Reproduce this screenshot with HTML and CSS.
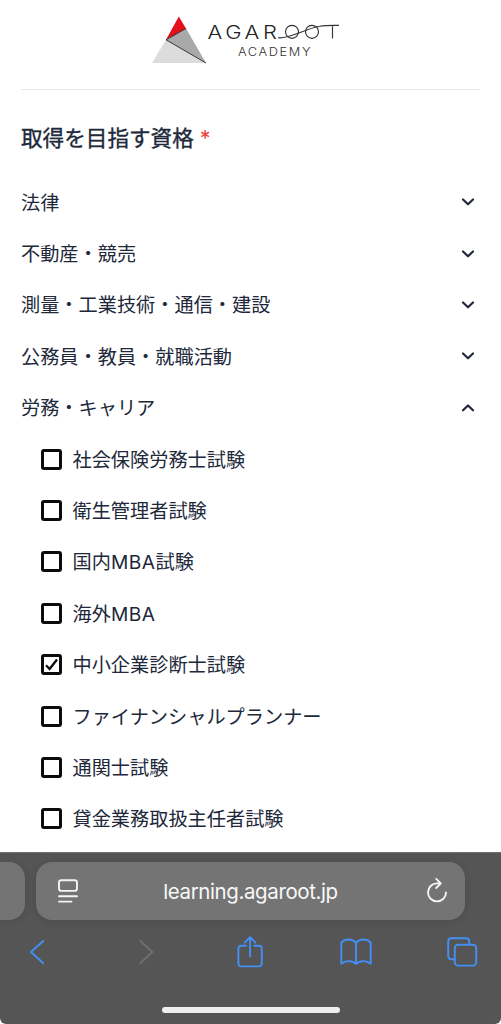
FILE: index.html
```html
<!DOCTYPE html>
<html lang="ja">
<head>
<meta charset="utf-8">
<title>AGAROOT ACADEMY</title>
<link rel="stylesheet" href="styles.css">
</head>
<body>
<div class="screen">
  <main class="page">
    <header class="header">
      <svg class="logo" width="190" height="52" viewBox="151 14 190 52">
        <path d="M178.8 16.5 186 28.5 166 39.8Z" fill="#e60f1c"/>
        <path d="M186 28.5 206 63 166 39.8Z" fill="#a9a9a9"/>
        <path d="M166 39.8 206 63H152Z" fill="#dcdcdc"/>
        <path d="M186 28.5 166 39.8 206 63" fill="none" stroke="#222" stroke-width=".9"/>
        <text class="brand" x="207.5" y="38.5" textLength="73" lengthAdjust="spacingAndGlyphs">AGAR</text>
        <g fill="none" stroke="#333" stroke-width="1.15">
          <circle cx="292" cy="31.8" r="6.5"/>
          <circle cx="312" cy="31.8" r="6.5"/>
          <path d="M278 37.8C290 39 304 29 320 26.3 325 25.2 331 25.4 339 25.4M332.5 25.4V38.5"/>
        </g>
        <text class="brand-sub" x="238" y="55.8" textLength="74" lengthAdjust="spacingAndGlyphs">ACADEMY</text>
      </svg>
    </header>
    <h1 class="title">取得を目指す資格 <span class="required">*</span></h1>
    <ul class="list">
      <li class="row">法律<svg class="chevron" viewBox="0 0 14 8"><path d="M2 1.5 7 6.3 12 1.5"/></svg></li>
      <li class="row">不動産・競売<svg class="chevron" viewBox="0 0 14 8"><path d="M2 1.5 7 6.3 12 1.5"/></svg></li>
      <li class="row">測量・工業技術・通信・建設<svg class="chevron" viewBox="0 0 14 8"><path d="M2 1.5 7 6.3 12 1.5"/></svg></li>
      <li class="row">公務員・教員・就職活動<svg class="chevron" viewBox="0 0 14 8"><path d="M2 1.5 7 6.3 12 1.5"/></svg></li>
      <li class="row">労務・キャリア<svg class="chevron" viewBox="0 0 14 8"><path d="M2 6.3 7 1.5 12 6.3"/></svg></li>
      <li class="option"><span class="box"></span><span>社会保険労務士試験</span></li>
      <li class="option"><span class="box"></span><span>衛生管理者試験</span></li>
      <li class="option"><span class="box"></span><span>国内<span class="latin">MBA</span>試験</span></li>
      <li class="option"><span class="box"></span><span>海外<span class="latin">MBA</span></span></li>
      <li class="option"><span class="box"><svg class="check" viewBox="0 0 15 15"><path d="M2 8.2 5.6 12 13 2.5"/></svg></span><span>中小企業診断士試験</span></li>
      <li class="option"><span class="box"></span><span>ファイナンシャルプランナー</span></li>
      <li class="option"><span class="box"></span><span>通関士試験</span></li>
      <li class="option"><span class="box"></span><span>貸金業務取扱主任者試験</span></li>
    </ul>
  </main>
  <footer class="browser">
    <div class="tabs">
      <div class="prev-tab"></div>
      <div class="address">
        <svg class="reader" width="22" height="26" viewBox="0 0 22 26"><rect x="2" y="2.3" width="18" height="10.6" rx="2.4"/><path d="M2 18.3H20M2 23.6H14.5"/></svg>
        <span class="url">learning.agaroot.jp</span>
        <svg class="reload" width="22" height="26" viewBox="0 0 22 26"><path d="M14 5.4H11A9 9 0 1 0 20 14.4M10.2 .9 14.8 5.4 10.2 10"/></svg>
      </div>
    </div>
    <nav class="tools">
      <svg width="32" height="32" viewBox="0 0 32 32"><path d="M22.2 5 10 16 22.2 27.2"/></svg>
      <svg class="disabled" width="32" height="32" viewBox="0 0 32 32"><path d="M13.2 5 25.4 16 13.2 27.2"/></svg>
      <svg width="32" height="32" viewBox="0 0 32 32"><path d="M12 9.8H7.2Q4.4 9.8 4.4 12.6V27.6Q4.4 30.4 7.2 30.4H25Q27.8 30.4 27.8 27.6V12.6Q27.8 9.8 25 9.8H20.2M16.1 20.5V1.5M10.8 6.5 16.1 1.2 21.4 6.5"/></svg>
      <svg width="32" height="32" viewBox="0 0 32 32"><path d="M16 6.8C12 2.2 4.5 2.8 1.3 6.6V27.8C5 24.5 12 24 16 28 20 24 27 24.5 30.7 27.8V6.6C27.5 2.8 20 2.2 16 6.8ZM16 6.8V28"/></svg>
      <svg width="32" height="32" viewBox="0 0 32 32"><path d="M8.8 23.2H5.4Q2.2 23.2 2.2 20V5.5Q2.2 2.3 5.4 2.3H20Q23.2 2.3 23.2 5.5V8.5"/><rect x="8.8" y="8.8" width="21.4" height="20.8" rx="3.2"/></svg>
    </nav>
    <div class="home"></div>
  </footer>
</div>
</body>
</html>
```
FILE: styles.css
```css
* { box-sizing: border-box; }
body { margin: 0; background: #fff; font-family: Inter, "Noto Sans CJK JP", sans-serif; color: #20283a; }
.screen { width: 501px; height: 1024px; display: flex; flex-direction: column; overflow: hidden; }
.page { height: 852px; flex: none; padding: 0 21px; overflow: hidden; }
.header { height: 90px; padding-top: 14px; display: flex; justify-content: center; align-items: flex-start; border-bottom: 1px solid #e8e8e8; }
.logo { margin-right: 10px; }
.brand { font: 300 18.3px Inter, sans-serif; letter-spacing: 3px; fill: #222; }
.brand-sub { font: 300 12px Inter, sans-serif; letter-spacing: 1.5px; fill: #333; }
.title { height: 86px; margin: 0; padding-top: 28px; font-size: 21.6px; line-height: 40px; font-weight: 400; -webkit-text-stroke: .35px currentColor; white-space: nowrap; }
.required { color: #ef4040; -webkit-text-stroke: 0; }
.list { margin: 0; padding: 0; list-style: none; font-size: 19.2px; }
.row, .option { height: 51.4px; display: flex; align-items: center; white-space: nowrap; }
.row { justify-content: space-between; }
.chevron { width: 14px; height: 8px; margin: 1px 5.5px 0 0; fill: none; stroke: #20283a; stroke-width: 2.2; stroke-linecap: round; stroke-linejoin: round; }
.option { padding-left: 20px; gap: 10.5px; }
.latin { letter-spacing: .5px; }
.box { width: 21px; height: 21px; margin-top: 1px; flex: none; border: 3px solid #0b0b0b; border-radius: 3px; }
.check { display: block; width: 15px; height: 15px; fill: none; stroke: #0b0b0b; stroke-width: 2.3; }
.browser { flex: 1; display: flex; flex-direction: column; background: #555; border-top: 1px solid #707070; border-radius: 0 0 6px 6px; }
.tabs { display: flex; gap: 11px; padding-top: 9px; }
.prev-tab { width: 25px; height: 58px; background: #747474; border-radius: 0 16px 16px 0; box-shadow: 0 1px 8px #0002; }
.address { width: 429px; height: 58px; padding: 0 17px 0 21px; display: flex; align-items: center; justify-content: space-between; background: #747474; border-radius: 16px; box-shadow: 0 1px 8px #0002; color: #f8f8f8; }
.url { margin-right: 4px; font-size: 20.5px; letter-spacing: -.4px; }
.reader, .reload { fill: none; stroke: #f4f4f4; stroke-width: 1.9; stroke-linecap: round; stroke-linejoin: round; }
.tools { display: flex; justify-content: space-between; padding: 16px 23px 0 21px; }
.tools svg { fill: none; stroke: #438ff5; stroke-width: 1.9; stroke-linecap: round; stroke-linejoin: round; }
.tools .disabled { stroke: #707070; }
.home { width: 178px; height: 6px; margin: 39px auto 0; background: #efefef; border-radius: 3px; }
```
